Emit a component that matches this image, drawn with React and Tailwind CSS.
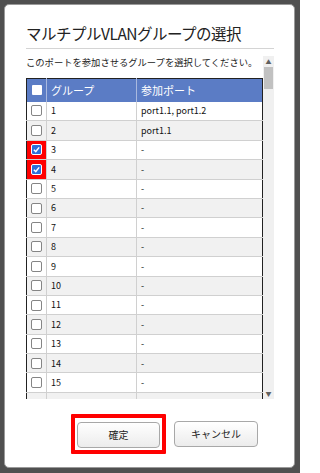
import React from "react";

const rows = [
  { id: 1, port: "port1.1, port1.2" },
  { id: 2, port: "port1.1" },
  { id: 3, port: "-", checked: true },
  { id: 4, port: "-", checked: true },
  ...Array.from({ length: 11 }, (_, i) => ({ id: i + 5, port: "-" })),
];

const Box = ({ checked }) =>
  checked ? (
    <span className="flex h-[11px] w-[11px] items-center justify-center rounded-[2px] border border-white bg-[#2e6fd9]">
      <svg viewBox="0 0 10 10" className="h-[9px] w-[9px]">
        <path d="M2 5.2 L4.2 7.3 L8 2.6" fill="none" stroke="#fff" strokeWidth="1.6" />
      </svg>
    </span>
  ) : (
    <span className="block h-[11px] w-[11px] rounded-[2px] border border-[#858585] bg-white"></span>
  );

const App = () => {
  return (
    <div
      className="h-[473px] w-[300px] bg-[#505050] pb-[5px] pl-[4px] pr-[5px] pt-[4px]"
      style={{ fontFamily: '"Noto Sans CJK JP", "Liberation Sans", sans-serif' }}
    >
      <div className="flex h-full flex-col rounded-[5px] border border-[#9a9a9a] bg-white pl-[21px] pr-[20px]">
        <h1 className="mt-[17px] text-[15.5px] leading-[22px] tracking-[-0.5px] text-[#222]">
          マルチプルVLANグループの選択
        </h1>
        <hr className="mt-[4px] border-t border-[#d4d4d4]" />

        <div className="mt-[7px] flex h-[343px]">
          <div className="flex-1 overflow-hidden">
            <p className="text-[9.3px] leading-[13px] text-[#222]">
              このポートを参加させるグループを選択してください。
            </p>
            <table className="mt-[9px] w-full border-collapse border border-[#222] text-[9px] text-[#111]">
              <thead>
                <tr className="h-[23px] bg-[#5b7cc5] text-[11px] text-white">
                  <th className="w-[20px] border-r border-[#a9b9df]">
                    <span className="mx-auto block h-[10px] w-[10px] rounded-[1px] bg-white"></span>
                  </th>
                  <th className="w-[90px] border-r border-[#a9b9df] pl-[4px] text-left font-normal">
                    グループ
                  </th>
                  <th className="pl-[4px] text-left font-normal">参加ポート</th>
                </tr>
              </thead>
              <tbody>
                {rows.map((r) => (
                  <tr
                    key={r.id}
                    className={
                      r.id % 2 === 0
                        ? "h-[19.4px] border-b border-[#d0d0d0] bg-[#f1f1f1]"
                        : "h-[19.4px] border-b border-[#d0d0d0] bg-white"
                    }
                  >
                    <td
                      className={
                        r.checked
                          ? "border-r border-[#d0d0d0] bg-[#ff0000]"
                          : "border-r border-[#d0d0d0]"
                      }
                    >
                      <div className="flex justify-center">
                        <Box checked={r.checked} />
                      </div>
                    </td>
                    <td className="border-r border-[#d0d0d0] pl-[4px]">{r.id}</td>
                    <td className="pl-[4px]">{r.port}</td>
                  </tr>
                ))}
                {/* next row, mostly scrolled out of view */}
                <tr className="h-[19.4px] bg-[#f1f1f1]">
                  <td className="border-r border-[#d0d0d0]"></td>
                  <td className="border-r border-[#d0d0d0]"></td>
                  <td></td>
                </tr>
              </tbody>
            </table>
          </div>
          {/* scrollbar */}
          <div className="flex w-[11px] flex-col bg-[#f0f0f0]">
            <div className="flex h-[11px] items-center justify-center text-[6px] leading-none text-[#606060]">
              ▲
            </div>
            <div className="mx-[1px] h-[22px] bg-[#c1c1c1]"></div>
            <div className="flex-1"></div>
            <div className="flex h-[11px] items-center justify-center text-[6px] leading-none text-[#606060]">
              ▼
            </div>
          </div>
        </div>

        <div className="mt-[15px] flex items-center">
          <div className="ml-[45px] rounded-[1px] border-[4px] border-[#ff0000] p-[2px]">
            <button className="h-[26px] w-[83px] rounded-[4px] border border-[#a8a8a8] bg-gradient-to-b from-white to-[#ececec] text-[10px] text-[#222]">
              確定
            </button>
          </div>
          <button className="ml-[8px] h-[26px] w-[84px] rounded-[4px] border border-[#a8a8a8] bg-gradient-to-b from-white to-[#ececec] text-[10px] text-[#222]">
            キャンセル
          </button>
        </div>
      </div>
    </div>
  );
};

export default App;
